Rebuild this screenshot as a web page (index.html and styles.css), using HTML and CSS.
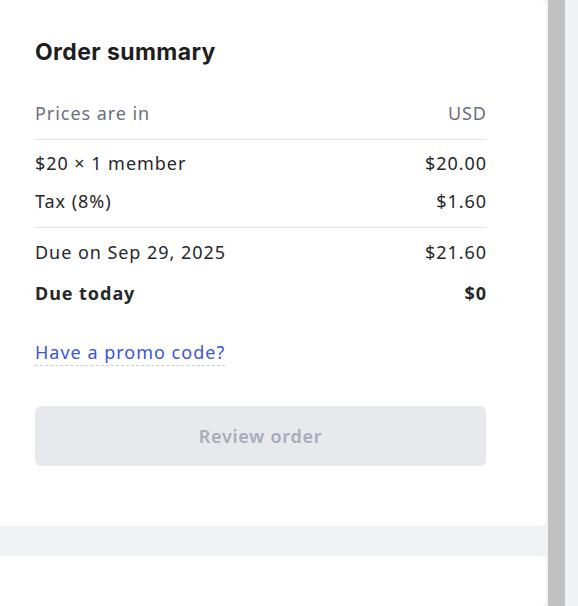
FILE: index.html
```html
<!DOCTYPE html>
<html lang="en">
<head>
<meta charset="utf-8">
<title>Order summary</title>
<link rel="stylesheet" href="styles.css">
</head>
<body>
<div class="layout">
  <main class="column">
    <section class="card summary">
      <h2 class="title">Order summary</h2>
      <div class="row muted currency">
        <span>Prices are in</span><span>USD</span>
      </div>
      <div class="group">
        <div class="row"><span>$20 × 1 member</span><span>$20.00</span></div>
        <div class="row"><span>Tax (8%)</span><span>$1.60</span></div>
      </div>
      <div class="group totals">
        <div class="row"><span>Due on Sep 29, 2025</span><span>$21.60</span></div>
        <div class="row strong"><span>Due today</span><span>$0</span></div>
      </div>
      <a class="promo" href="#">Have a promo code?</a>
      <button class="review" type="button" disabled>Review order</button>
    </section>
    <section class="card next"></section>
  </main>
  <div class="scrollbar"></div>
</div>
</body>
</html>
```

FILE: styles.css
```css
* { box-sizing: border-box; }
html, body { margin: 0; height: 100%; }
body {
  background: #f1f2f4;
  font-family: "Noto Sans", "Open Sans", sans-serif;
  color: #26272b;
  overflow: hidden;
}
.layout {
  display: flex;
  height: 606px;
}
.column {
  width: 546px;
  display: flex;
  flex-direction: column;
  gap: 30px;
}
.card {
  background: #ffffff;
  border-radius: 0 6px 6px 0;
}
.summary {
  padding: 38px 60px 60px 35px;
  display: flex;
  flex-direction: column;
}
.next { flex: 1; }
.title {
  margin: 0;
  font-family: "Inter", "Lato", sans-serif;
  font-size: 23px;
  line-height: 28px;
  font-weight: 700;
  letter-spacing: 0.4px;
  color: #1d1e22;
}
.row {
  display: flex;
  justify-content: space-between;
  font-size: 18px;
  line-height: 26px;
  letter-spacing: 0.95px;
}
.row span:last-child { margin-right: -0.95px; }
.muted { color: #6b6f7b; }
.currency {
  margin-top: 34px;
  padding-bottom: 13px;
  border-bottom: 1px solid #e3e4e8;
}
.group {
  display: flex;
  flex-direction: column;
  gap: 12px;
  padding-top: 10px;
  padding-bottom: 13px;
  border-bottom: 1px solid #e3e4e8;
}
.totals {
  padding-top: 11px;
  padding-bottom: 0;
  border-bottom: none;
  gap: 15px;
}
.strong { font-weight: 700; }
.promo {
  align-self: flex-start;
  margin-top: 33px;
  font-size: 18px;
  line-height: 26px;
  letter-spacing: 1px;
  color: #3b55d9;
  text-decoration: none;
  border-bottom: 1px dashed #c7cbe0;
}
.review {
  margin-top: 40px;
  height: 60px;
  border: none;
  border-radius: 6px;
  background: #e8e9ed;
  color: #a9acb8;
  font-family: "Noto Sans", "Open Sans", sans-serif;
  font-size: 18px;
  font-weight: 600;
  letter-spacing: 0.75px;
}
.scrollbar {
  margin-left: 2px;
  width: 17px;
  background: #c1c1c1;
}
```
